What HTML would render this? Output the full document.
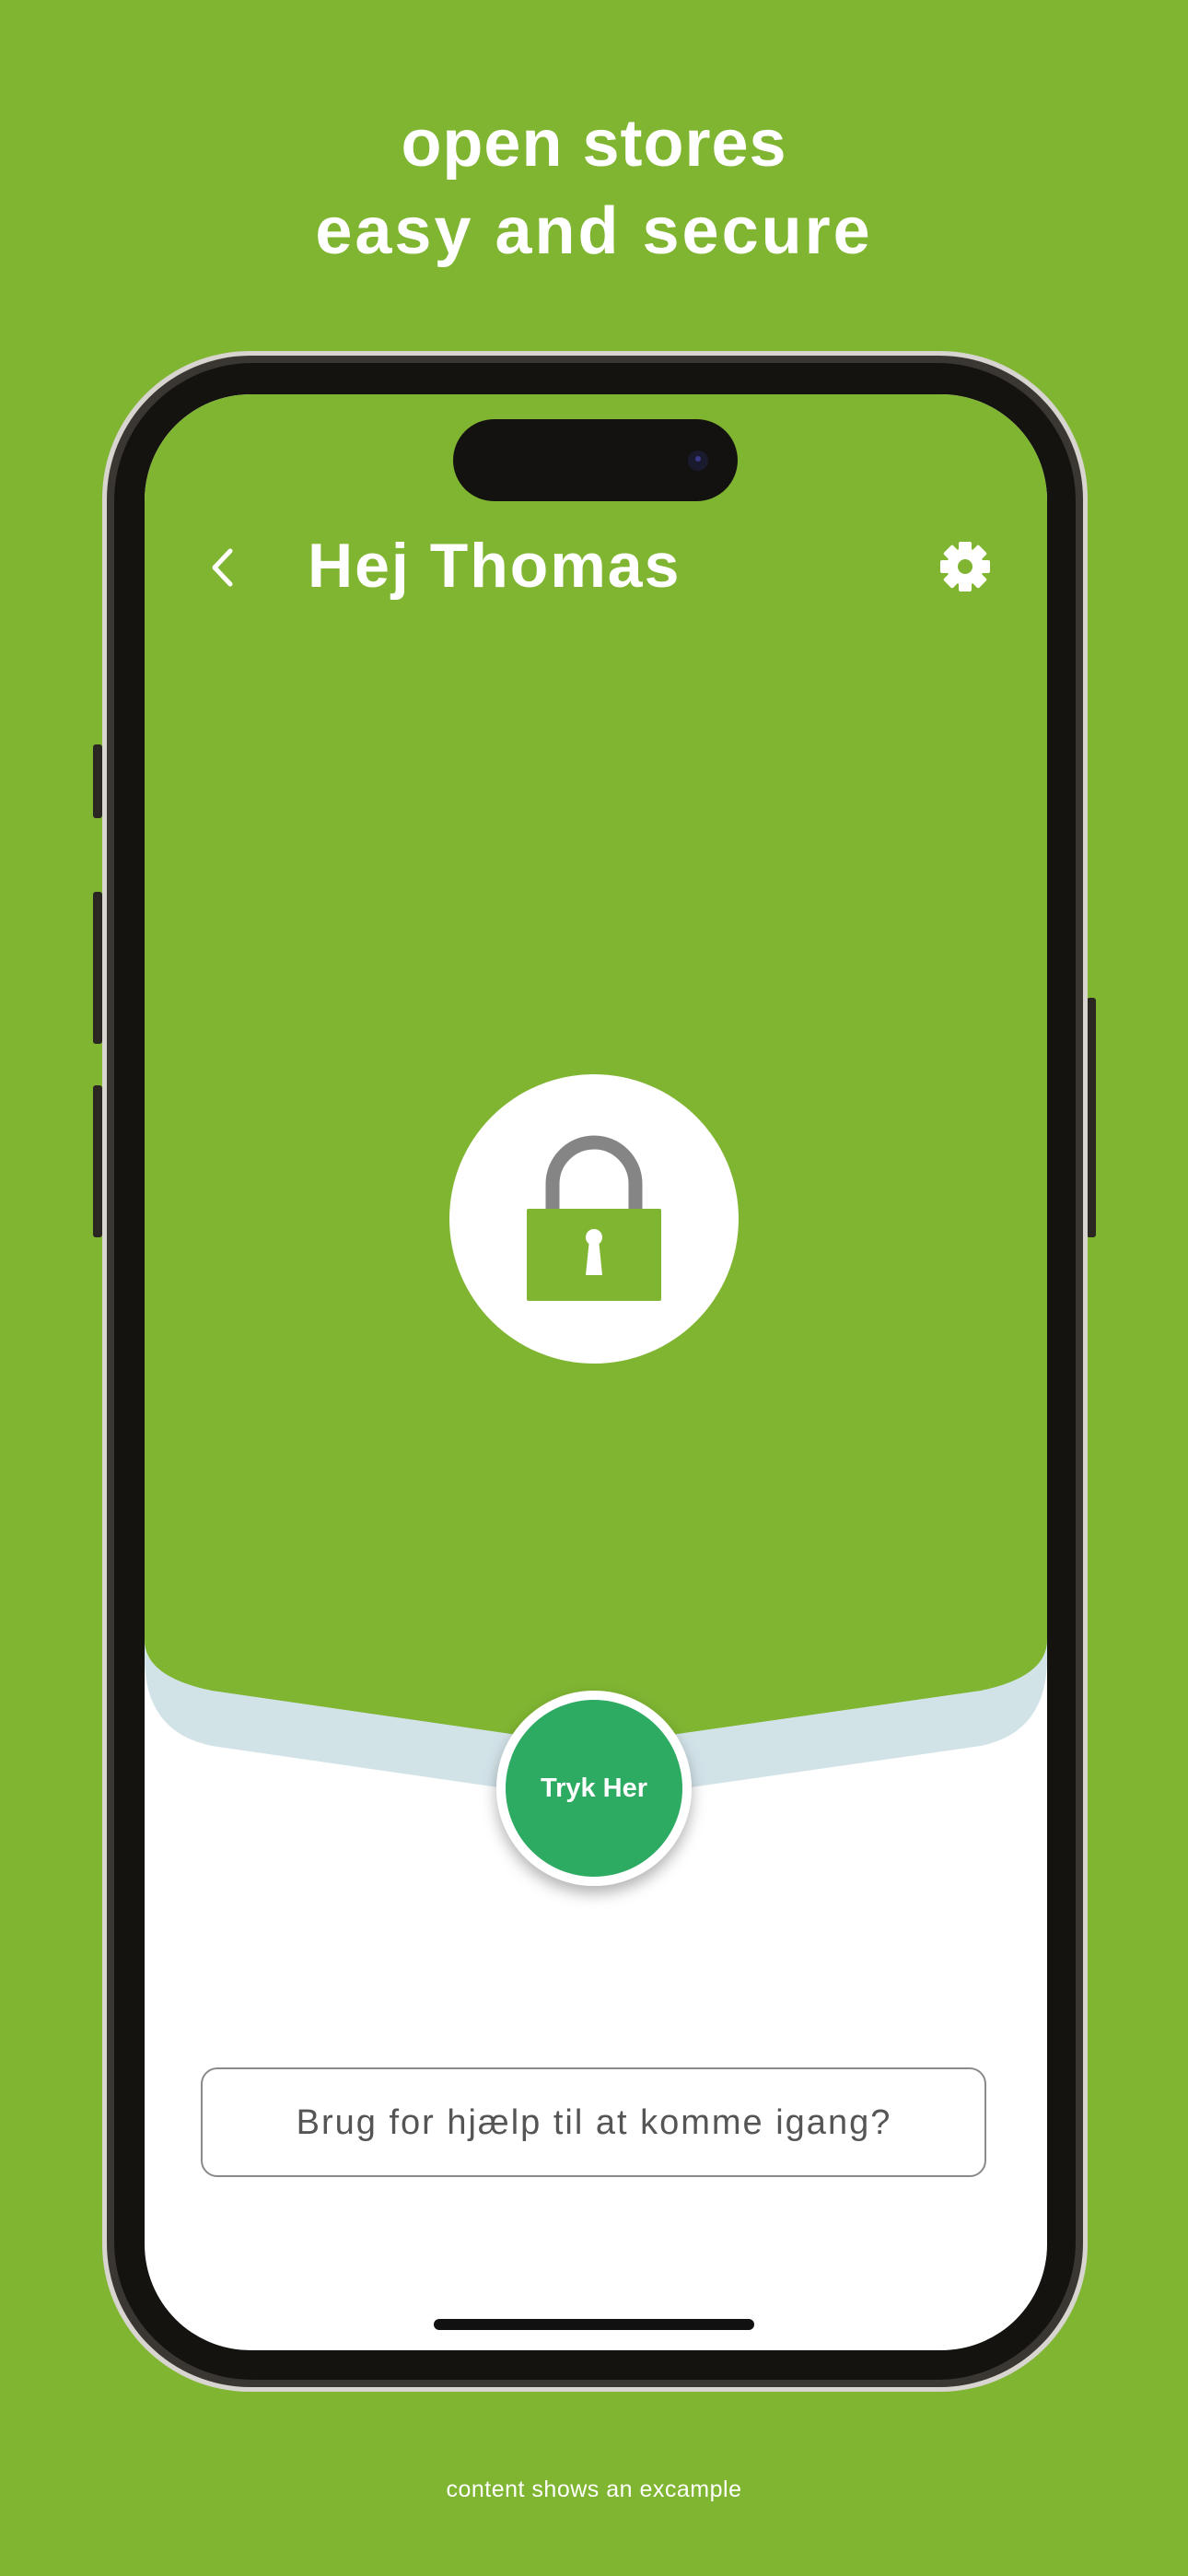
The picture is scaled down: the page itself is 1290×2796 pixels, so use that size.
<!DOCTYPE html>
<html><head><meta charset="utf-8"><style>
html,body{margin:0;padding:0}
body{width:1290px;height:2796px;background:#80b532;position:relative;overflow:hidden;font-family:"Liberation Sans",sans-serif}
.t{position:absolute;left:0;width:1290px;text-align:center;color:#fff;font-weight:bold;font-size:72px;letter-spacing:1px}
.f{position:absolute;left:0;width:1290px;text-align:center;color:#fff;font-size:25px;top:2688px;letter-spacing:0.5px}
</style></head><body>
<div class="t" style="top:115px">open stores</div>
<div class="t" style="top:210px;letter-spacing:3px">easy and secure</div>
<svg width="1290" height="2796" style="position:absolute;left:0;top:0">
<defs><clipPath id="scr"><rect x="157" y="428" width="980" height="2123" rx="115"/></clipPath>
<filter id="sh" x="-30%" y="-30%" width="160%" height="160%"><feDropShadow dx="0" dy="8" stdDeviation="8" flood-opacity="0.3"/></filter></defs>
<rect x="101" y="808" width="10" height="80" rx="3" fill="#2a2622"/>
<rect x="101" y="968" width="10" height="165" rx="3" fill="#2a2622"/>
<rect x="101" y="1178" width="10" height="165" rx="3" fill="#2a2622"/>
<rect x="1180" y="1083" width="10" height="260" rx="3" fill="#2a2622"/>
<rect x="111" y="381" width="1070" height="2215" rx="160" fill="#d8d4cf"/>
<rect x="116" y="386" width="1060" height="2205" rx="156" fill="#3a3632"/>
<rect x="124" y="394" width="1044" height="2189" rx="150" fill="#151310"/>
<g clip-path="url(#scr)">
<rect x="157" y="428" width="980" height="2123" fill="#fff"/>
<path d="M157 1780 L157 1800 Q157 1880 230 1895 L645 1955 L1065 1895 Q1137 1880 1137 1800 L1137 1780 Z" fill="#d2e3e8"/>
<path d="M157 428 L1137 428 L1137 1780 Q1137 1820 1065 1835 L645 1895 L230 1835 Q157 1820 157 1780 Z" fill="#80b532"/>
</g>
<rect x="492" y="455" width="309" height="89" rx="44.5" fill="#131210"/>
<circle cx="758" cy="500" r="11" fill="#1a1a2e"/><circle cx="758" cy="498" r="3" fill="#3a3a8a"/>
<path d="M250 598 L233 616 L250 634" stroke="#fff" stroke-width="5" fill="none" stroke-linecap="round" stroke-linejoin="round"/>
<g transform="translate(1048,615)" fill="#fff">
<g id="tooth"><rect x="-7" y="-27" width="14" height="14" rx="2"/></g>
<use href="#tooth" transform="rotate(45)"/><use href="#tooth" transform="rotate(90)"/><use href="#tooth" transform="rotate(135)"/>
<use href="#tooth" transform="rotate(180)"/><use href="#tooth" transform="rotate(225)"/><use href="#tooth" transform="rotate(270)"/><use href="#tooth" transform="rotate(315)"/>
<circle r="20"/><circle r="8" fill="#80b532"/>
</g>
<circle cx="645" cy="1323" r="157" fill="#fff"/>
<path d="M600 1312 V1285 A45 45 0 0 1 690 1285 V1312" stroke="#858585" stroke-width="15" fill="none"/>
<rect x="572" y="1312" width="146" height="100" rx="2" fill="#80b532"/>
<circle cx="645" cy="1343" r="9" fill="#fff"/>
<path d="M640 1345 L650 1345 L654 1384 L636 1384 Z" fill="#fff"/>
<circle cx="645" cy="1941" r="106" fill="#fff" filter="url(#sh)"/>
<circle cx="645" cy="1941" r="96" fill="#2eab62"/>
<text x="645" y="1950" text-anchor="middle" fill="#fff" font-size="29" font-weight="bold" font-family="Liberation Sans, sans-serif">Tryk Her</text>
<rect x="219" y="2245" width="851" height="117" rx="17" fill="#fff" stroke="#8a8a8a" stroke-width="2"/>
<text x="645" y="2316" text-anchor="middle" fill="#555" font-size="38" letter-spacing="2" font-family="Liberation Sans, sans-serif">Brug for hjælp til at komme igang?</text>
<rect x="471" y="2517" width="348" height="12" rx="6" fill="#111"/>
</svg>
<div style="position:absolute;left:334px;top:575px;color:#fff;font-weight:bold;font-size:68px;letter-spacing:2px">Hej Thomas</div>
<div class="f">content shows an excample</div>
</body></html>
